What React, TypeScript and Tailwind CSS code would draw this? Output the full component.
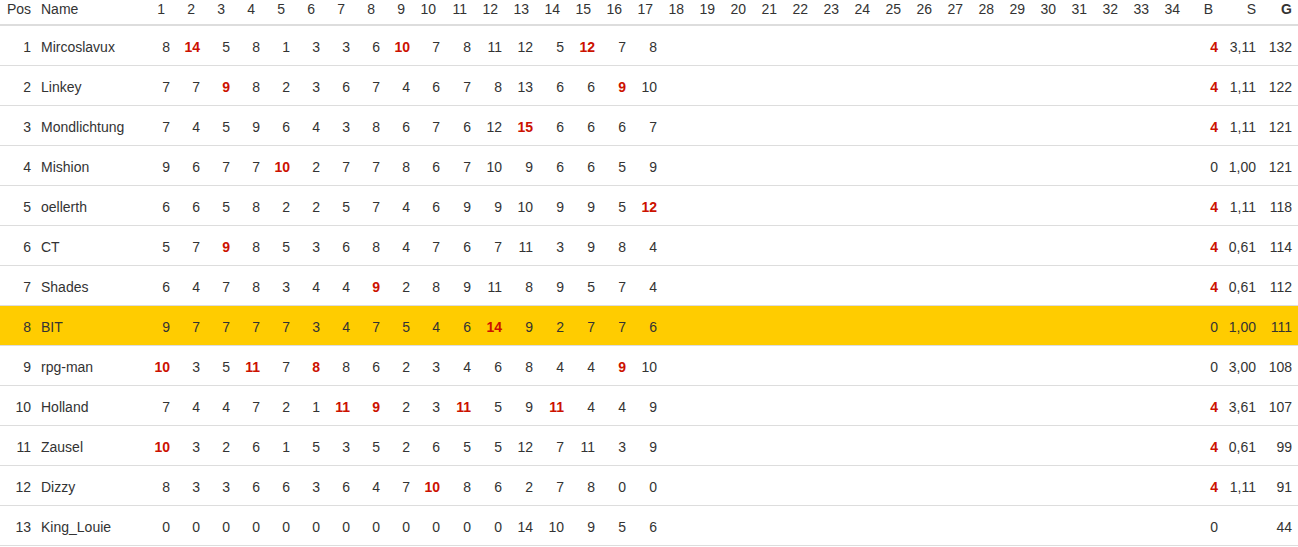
import React from "react";

type Row = {
  pos: number;
  name: string;
  rounds: string[];
  b: string;
  s: string;
  g: number;
  highlight?: boolean;
};

// "*" marks a best round (shown bold red)
const rows: Row[] = [
  { pos: 1, name: "Mircoslavux", rounds: "8 14* 5 8 1 3 3 6 10* 7 8 11 12 5 12* 7 8".split(" "), b: "4*", s: "3,11", g: 132 },
  { pos: 2, name: "Linkey", rounds: "7 7 9* 8 2 3 6 7 4 6 7 8 13 6 6 9* 10".split(" "), b: "4*", s: "1,11", g: 122 },
  { pos: 3, name: "Mondlichtung", rounds: "7 4 5 9 6 4 3 8 6 7 6 12 15* 6 6 6 7".split(" "), b: "4*", s: "1,11", g: 121 },
  { pos: 4, name: "Mishion", rounds: "9 6 7 7 10* 2 7 7 8 6 7 10 9 6 6 5 9".split(" "), b: "0", s: "1,00", g: 121 },
  { pos: 5, name: "oellerth", rounds: "6 6 5 8 2 2 5 7 4 6 9 9 10 9 9 5 12*".split(" "), b: "4*", s: "1,11", g: 118 },
  { pos: 6, name: "CT", rounds: "5 7 9* 8 5 3 6 8 4 7 6 7 11 3 9 8 4".split(" "), b: "4*", s: "0,61", g: 114 },
  { pos: 7, name: "Shades", rounds: "6 4 7 8 3 4 4 9* 2 8 9 11 8 9 5 7 4".split(" "), b: "4*", s: "0,61", g: 112 },
  { pos: 8, name: "BIT", rounds: "9 7 7 7 7 3 4 7 5 4 6 14* 9 2 7 7 6".split(" "), b: "0", s: "1,00", g: 111, highlight: true },
  { pos: 9, name: "rpg-man", rounds: "10* 3 5 11* 7 8* 8 6 2 3 4 6 8 4 4 9* 10".split(" "), b: "0", s: "3,00", g: 108 },
  { pos: 10, name: "Holland", rounds: "7 4 4 7 2 1 11* 9* 2 3 11* 5 9 11* 4 4 9".split(" "), b: "4*", s: "3,61", g: 107 },
  { pos: 11, name: "Zausel", rounds: "10* 3 2 6 1 5 3 5 2 6 5 5 12 7 11 3 9".split(" "), b: "4*", s: "0,61", g: 99 },
  { pos: 12, name: "Dizzy", rounds: "8 3 3 6 6 3 6 4 7 10* 8 6 2 7 8 0 0".split(" "), b: "4*", s: "1,11", g: 91 },
  { pos: 13, name: "King_Louie", rounds: "0 0 0 0 0 0 0 0 0 0 0 0 14 10 9 5 6".split(" "), b: "0", s: "", g: 44 },
];

const cols = Array.from({ length: 34 }, (_, i) => i + 1);

const Val = ({ v }: { v: string }) =>
  v.endsWith("*") ? (
    <span className="font-bold text-[#cc1100]">{v.slice(0, -1)}</span>
  ) : (
    <span>{v}</span>
  );

export default function App() {
  return (
    <div className="w-[1298px] bg-white text-[14px] text-[#333333] font-['Liberation_Sans',Arial,sans-serif]">
      {/* header */}
      <div className="flex h-[26px] border-b-2 border-[#dddddd] leading-[18px]">
        <div className="w-[36px] shrink-0 pr-[5px] text-right">Pos</div>
        <div className="w-[110px] shrink-0 pl-[5px]">Name</div>
        {cols.map((c) => (
          <div
            key={c}
            className={
              c <= 9
                ? "w-[30px] shrink-0 pr-[11px] text-right"
                : c === 10
                ? "w-[30px] shrink-0 pr-[10px] text-right"
                : "w-[31px] shrink-0 pr-[10px] text-right"
            }
          >
            {c}
          </div>
        ))}
        <div className="w-[34px] shrink-0 pr-[11px] text-right">B</div>
        <div className="w-[38px] shrink-0 pr-[6px] text-right">S</div>
        <div className="w-[36px] shrink-0 pr-[6px] text-right font-bold">G</div>
      </div>

      {rows.map((r) => (
        <div
          key={r.pos}
          className={`flex h-[40px] border-b border-[#dddddd] pt-[11px] leading-[20px] ${
            r.highlight ? "bg-[#ffcc00]" : ""
          }`}
        >
          <div className="w-[36px] shrink-0 pr-[5px] text-right">{r.pos}</div>
          <div className="w-[110px] shrink-0 pl-[5px] whitespace-nowrap">{r.name}</div>
          {cols.map((c) => (
            <div
              key={c}
              className={
                c <= 10
                  ? "w-[30px] shrink-0 pr-[6px] text-right"
                  : "w-[31px] shrink-0 pr-[6px] text-right"
              }
            >
              {r.rounds[c - 1] ? <Val v={r.rounds[c - 1]} /> : null}
            </div>
          ))}
          <div className="w-[34px] shrink-0 pr-[6px] text-right">
            <Val v={r.b} />
          </div>
          <div className="w-[38px] shrink-0 pr-[6px] text-right">{r.s}</div>
          <div className="w-[36px] shrink-0 pr-[6px] text-right">{r.g}</div>
        </div>
      ))}
    </div>
  );
}
